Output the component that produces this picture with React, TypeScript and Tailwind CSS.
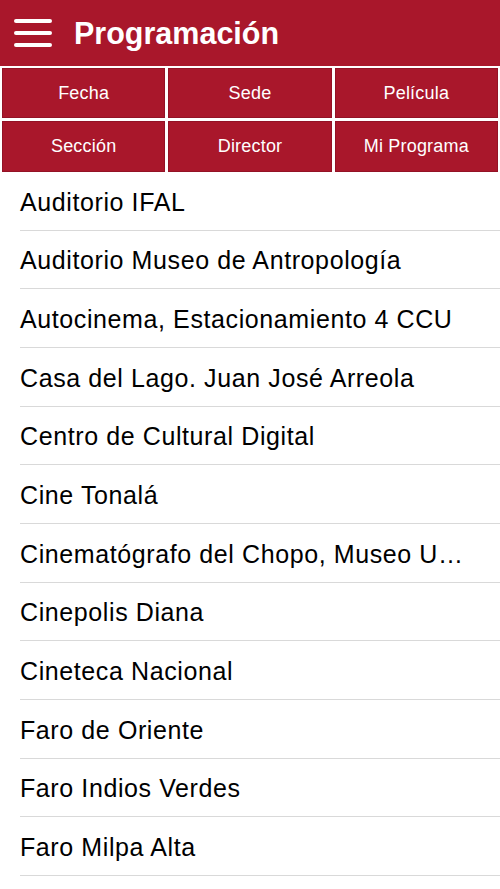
import React from "react";

const buttons = ["Fecha", "Sede", "Película", "Sección", "Director", "Mi Programa"];
const venues = [
  "Auditorio IFAL",
  "Auditorio Museo de Antropología",
  "Autocinema, Estacionamiento 4 CCU",
  "Casa del Lago. Juan José Arreola",
  "Centro de Cultural Digital",
  "Cine Tonalá",
  "Cinematógrafo del Chopo, Museo U…",
  "Cinepolis Diana",
  "Cineteca Nacional",
  "Faro de Oriente",
  "Faro Indios Verdes",
  "Faro Milpa Alta",
];

export default function App() {
  return (
    <div
      className="w-[500px] h-[889px] overflow-hidden bg-white"
      style={{ fontFamily: '"Liberation Sans", Arial, sans-serif' }}
    >
      <header className="h-[66px] bg-[#a9172b] flex items-center">
        <div className="ml-[14px] w-[38px] flex flex-col gap-[8px]">
          <div className="h-[4px] rounded-full bg-white" />
          <div className="h-[4px] rounded-full bg-white" />
          <div className="h-[4px] rounded-full bg-white" />
        </div>
        <h1 className="ml-[22px] text-white font-bold text-[30.5px] leading-none mt-[1px]">
          Programación
        </h1>
      </header>
      <div className="grid grid-cols-3 gap-[3px] px-[2px] pt-[2px] bg-white">
        {buttons.map((b, i) => (
          <div
            key={b}
            className={`${i < 3 ? "h-[50px]" : "h-[51px]"} bg-[#a9172b] border border-[#931226] flex items-center justify-center text-white text-[18px] tracking-[0.2px]`}
          >
            {b}
          </div>
        ))}
      </div>
      <ul>
        {venues.map((v) => (
          <li key={v} className="h-[58.67px] pl-[20px]">
            <div className="h-full border-b border-[#d9d9d9] flex items-center pr-[28px]">
              <span className="text-black text-[25px] tracking-[0.6px] whitespace-nowrap leading-[30px] mt-[2px]">
                {v}
              </span>
            </div>
          </li>
        ))}
      </ul>
    </div>
  );
}
